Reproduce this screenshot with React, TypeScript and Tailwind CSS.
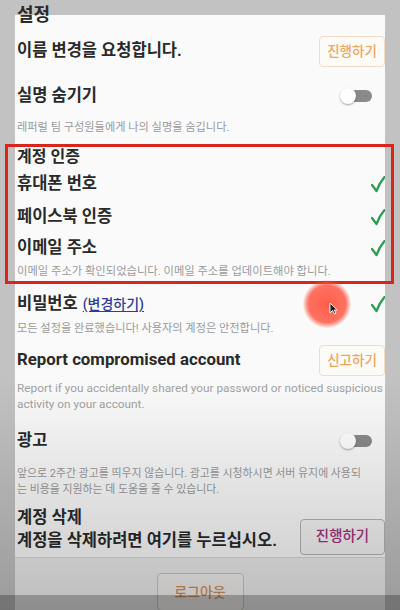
import React from "react";

function Check() {
  return (
    <svg width="14" height="17" viewBox="0 0 14 17" className="shrink-0">
      <path
        d="M1 9 L5.5 15 C7.5 9.5 10 5 13.5 1"
        fill="none"
        stroke="#2f9d56"
        strokeWidth="2.3"
        strokeLinecap="round"
        strokeLinejoin="round"
      />
    </svg>
  );
}

function Toggle() {
  return (
    <div className="relative w-[32px] h-[16px] mr-[13px] shrink-0">
      <div className="absolute left-[6px] right-0 top-[2px] h-[12px] rounded-full bg-[#8a8a8a]" />
      <div className="absolute left-0 top-0 w-[16px] h-[16px] rounded-full bg-white shadow-[0_1px_2px_rgba(0,0,0,0.35)]" />
    </div>
  );
}

function OrangeBtn({ children }: { children: React.ReactNode }) {
  return (
    <div className="h-[31px] w-[66px] flex items-center justify-center rounded-[4px] border border-[#f2dcc6] bg-[#fdfbf8] text-[13.5px] font-medium text-[#eea65f] shrink-0">
      {children}
    </div>
  );
}

export default function App() {
  return (
    <div className="relative w-[400px] h-[610px] overflow-hidden bg-[#c2c2c2] font-['Roboto','Noto_Sans_CJK_KR',sans-serif] text-[#2a2a2a]">
      <div className="ml-[15px] mt-[15px] w-[370px] h-[580px] bg-[#fafafa] flex flex-col">
        <div className="-mt-[15px] pl-[2px] flex flex-col">
          <div className="h-[28px] flex items-center text-[18px] font-bold">설정</div>

          <div className="h-[46px] flex items-center justify-between">
            <span className="text-[16.5px] font-bold">이름 변경을 요청합니다.</span>
            <OrangeBtn>진행하기</OrangeBtn>
          </div>

          <div className="h-[44px] flex items-center justify-between">
            <span className="text-[16.5px] font-bold">실명 숨기기</span>
            <Toggle />
          </div>

          <div className="h-[20px] flex items-center text-[11.2px] text-[#9a9a9a]">
            레퍼럴 팀 구성원들에게 나의 실명을 숨깁니다.
          </div>

          <div className="h-[24px] mt-[7px] flex items-center text-[16px] font-bold">계정 인증</div>

          <div className="h-[30px] flex items-center justify-between">
            <span className="text-[16.5px] font-bold">휴대폰 번호</span>
            <Check />
          </div>
          <div className="h-[36px] flex items-center justify-between">
            <span className="text-[16.5px] font-bold">페이스북 인증</span>
            <Check />
          </div>
          <div className="h-[26px] flex items-center justify-between">
            <span className="text-[16.5px] font-bold">이메일 주소</span>
            <Check />
          </div>
          <div className="h-[22px] flex items-center text-[11.3px] text-[#9a9a9a]">
            이메일 주소가 확인되었습니다. 이메일 주소를 업데이트해야 합니다.
          </div>

          <div className="h-[32px] mt-[5px] flex items-center justify-between">
            <span className="flex items-baseline gap-[5px]">
              <span className="text-[16.5px] font-bold">비밀번호</span>
              <span className="text-[14px] font-medium text-[#2e3c9c] underline underline-offset-2">(변경하기)</span>
            </span>
            <Check />
          </div>
          <div className="h-[18px] flex items-center text-[11.2px] text-[#9a9a9a]">
            모든 설정을 완료했습니다! 사용자의 계정은 안전합니다.
          </div>

          <div className="h-[34px] mt-[5px] flex items-center justify-between">
            <span className="text-[16.8px] font-bold">Report compromised account</span>
            <OrangeBtn>신고하기</OrangeBtn>
          </div>
          <div className="mt-[3px] text-[11.8px] leading-[16px] text-[#a2a2a2] whitespace-nowrap">
            Report if you accidentally shared your password or noticed suspicious
            <br />
            activity on your account.
          </div>

          <div className="h-[30px] mt-[14px] flex items-center justify-between">
            <span className="text-[16.5px] font-bold">광고</span>
            <Toggle />
          </div>
          <div className="mt-[10px] text-[10.9px] leading-[16px] text-[#9a9a9a] whitespace-nowrap">
            앞으로 2주간 광고를 띄우지 않습니다. 광고를 시청하시면 서버 유지에 사용되
            <br />는 비용을 지원하는 데 도움을 줄 수 있습니다.
          </div>

          <div className="mt-[10px] h-[49px] flex items-start justify-between">
            <div className="flex flex-col">
              <div className="h-[20px] flex items-center text-[16.5px] font-bold">계정 삭제</div>
              <div className="h-[24px] mt-[1px] flex items-center text-[16.5px] font-bold">
                계정을 삭제하려면 여기를 누르십시오.
              </div>
            </div>
            <div className="mt-[11px] h-[36px] w-[85px] flex items-center justify-center rounded-[4px] border border-[#b4b4b4] bg-[#f4f4f4] text-[14.5px] font-medium text-[#a4327e] shrink-0">
              진행하기
            </div>
          </div>
        </div>

        <div className="flex-1 border-t border-[#d6d6d6] bg-[#ededed] flex justify-center">
          <div className="mt-[15px] h-[38px] w-[87px] flex items-center justify-center rounded-[4px] border border-[#cfc6bc] bg-[#f2f0ee] text-[14px] font-medium text-[#cf925a] shrink-0">
            로그아웃
          </div>
        </div>
      </div>

      {/* video dimming toward the bottom */}
      <div className="pointer-events-none absolute inset-0 bg-linear-to-b from-transparent via-transparent via-[62%] to-black/20" />
      <div className="pointer-events-none absolute left-0 right-0 bottom-0 h-[15px] bg-black/25" />

      {/* red annotation box */}
      <div className="pointer-events-none absolute left-[5px] top-[144px] w-[389px] h-[140px] border-[3px] border-[#d8261d]" />

      {/* click indicator + cursor */}
      <div className="pointer-events-none absolute left-[303px] top-[280px] w-[48px] h-[48px] rounded-full bg-[radial-gradient(circle,rgba(255,85,65,0.95)_0%,rgba(255,90,70,0.85)_55%,rgba(255,110,90,0)_72%)]" />
      <svg className="pointer-events-none absolute left-[329px] top-[302px]" width="9" height="13" viewBox="0 0 9 13">
        <path d="M1 1 L1 11 L3.5 8.5 L5.5 12 L7 11.2 L5.2 8 L8.3 8 Z" fill="#222" stroke="#fff" strokeWidth="0.9" strokeLinejoin="round" />
      </svg>
    </div>
  );
}
